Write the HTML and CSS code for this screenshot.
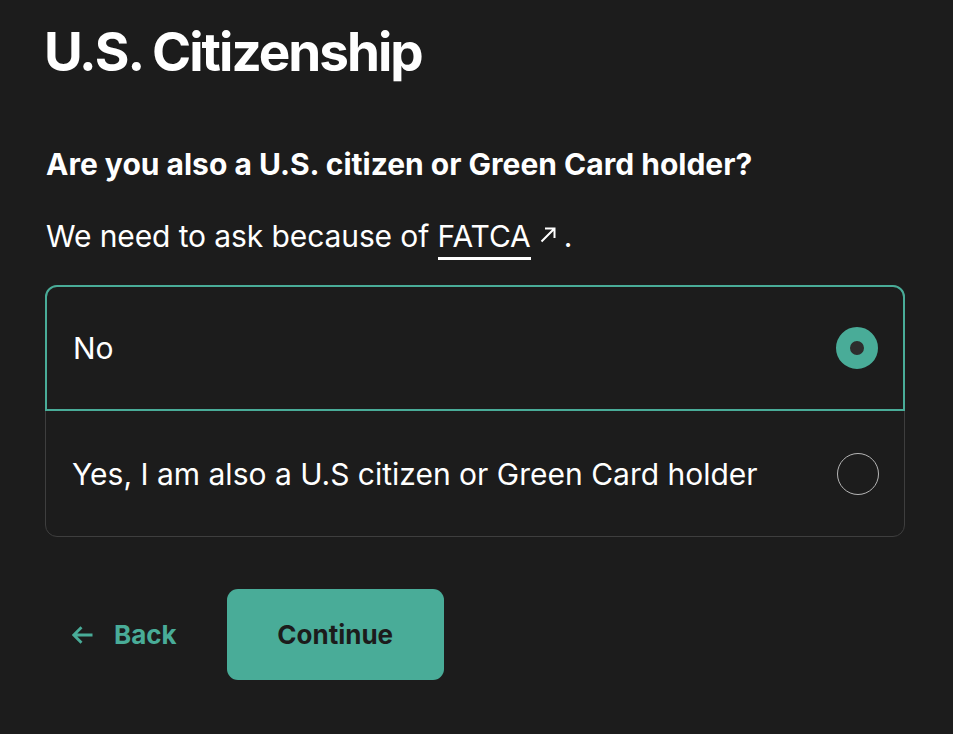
FILE: index.html
```html
<!DOCTYPE html>
<html lang="en">
<head>
<meta charset="utf-8">
<title>U.S. Citizenship</title>
<link rel="stylesheet" href="styles.css">
</head>
<body>
<main class="page">
  <h1 class="title">U.S. Citizenship</h1>
  <h2 class="question">Are you also a U.S. citizen or Green Card holder?</h2>
  <p class="hint">We need to ask because of <a class="link" href="#">FATCA</a><svg class="ext" viewBox="0 0 16 16" width="16" height="16" aria-hidden="true"><path d="M1.5 14.5 L14 2 M5 1.5 H14.5 V11" fill="none" stroke="currentColor" stroke-width="2"/></svg>.</p>
  <div class="options">
    <label class="option selected">
      <span class="option-label">No</span>
      <span class="radio on"></span>
    </label>
    <label class="option">
      <span class="option-label">Yes, I am also a U.S citizen or Green Card holder</span>
      <span class="radio"></span>
    </label>
  </div>
  <div class="actions">
    <a class="back" href="#"><svg class="arrow" viewBox="0 0 21 18" width="21" height="18" aria-hidden="true"><path d="M20.5 9 H2 M9.5 1.2 L1.8 9 L9.5 16.8" fill="none" stroke="currentColor" stroke-width="2.8"/></svg>Back</a>
    <button class="continue" type="button">Continue</button>
  </div>
</main>
</body>
</html>
```

FILE: styles.css
```css
html, body {
  margin: 0;
  padding: 0;
  background: #1c1c1c;
}
body {
  font-family: Inter, "Noto Sans", sans-serif;
  color: #ffffff;
}
.page {
  padding: 20px 48px 0 45px;
  width: 860px;
}
.title {
  margin: 0 0 0 -1px;
  font-size: 53px;
  font-weight: 700;
  letter-spacing: -2px;
  line-height: 64px;
}
.question {
  margin: 60px 0 0 1px;
  font-size: 30px;
  font-weight: 700;
  line-height: 40px;
  letter-spacing: 0;
}
.hint {
  margin: 32px 0 0 1px;
  font-size: 30px;
  line-height: 40px;
  letter-spacing: -0.1px;
}
.link {
  color: #ffffff;
  text-decoration: none;
  border-bottom: 3px solid #ffffff;
  padding-bottom: 3px;
}
.ext {
  margin: 0 8px 0 9px;
  vertical-align: 4px;
}
.options {
  margin-top: 29px;
  border: 1px solid #3e3e3e;
  border-radius: 12px;
  display: flex;
  flex-direction: column;
}
.option {
  display: flex;
  align-items: center;
  justify-content: space-between;
  height: 126px;
  padding: 0 26px 0 27px;
  box-sizing: border-box;
  margin: -1px;
}
.option + .option {
  margin-top: 0;
  height: 127px;
}
.option.selected {
  border: 2px solid #49ac98;
  border-radius: 12px 12px 0 0;
  padding: 0 25px 0 26px;
}
.option-label {
  font-size: 30px;
}
.radio {
  width: 42px;
  height: 42px;
  border-radius: 50%;
  border: 1px solid #b5b5b5;
  box-sizing: border-box;
}
.radio.on {
  border: 14px solid #49ac98;
  background: #2d2d2d;
}
.actions {
  margin-top: 52px;
  display: flex;
  align-items: center;
  gap: 50px;
}
.back {
  display: flex;
  align-items: center;
  gap: 21px;
  padding-left: 27px;
  color: #49ac98;
  font-size: 26px;
  font-weight: 700;
  text-decoration: none;
}
.continue {
  width: 217px;
  height: 91px;
  border: 0;
  border-radius: 11px;
  background: #49ac98;
  color: #1c1c1c;
  font-family: Inter, "Noto Sans", sans-serif;
  font-size: 26px;
  font-weight: 700;
}
```
